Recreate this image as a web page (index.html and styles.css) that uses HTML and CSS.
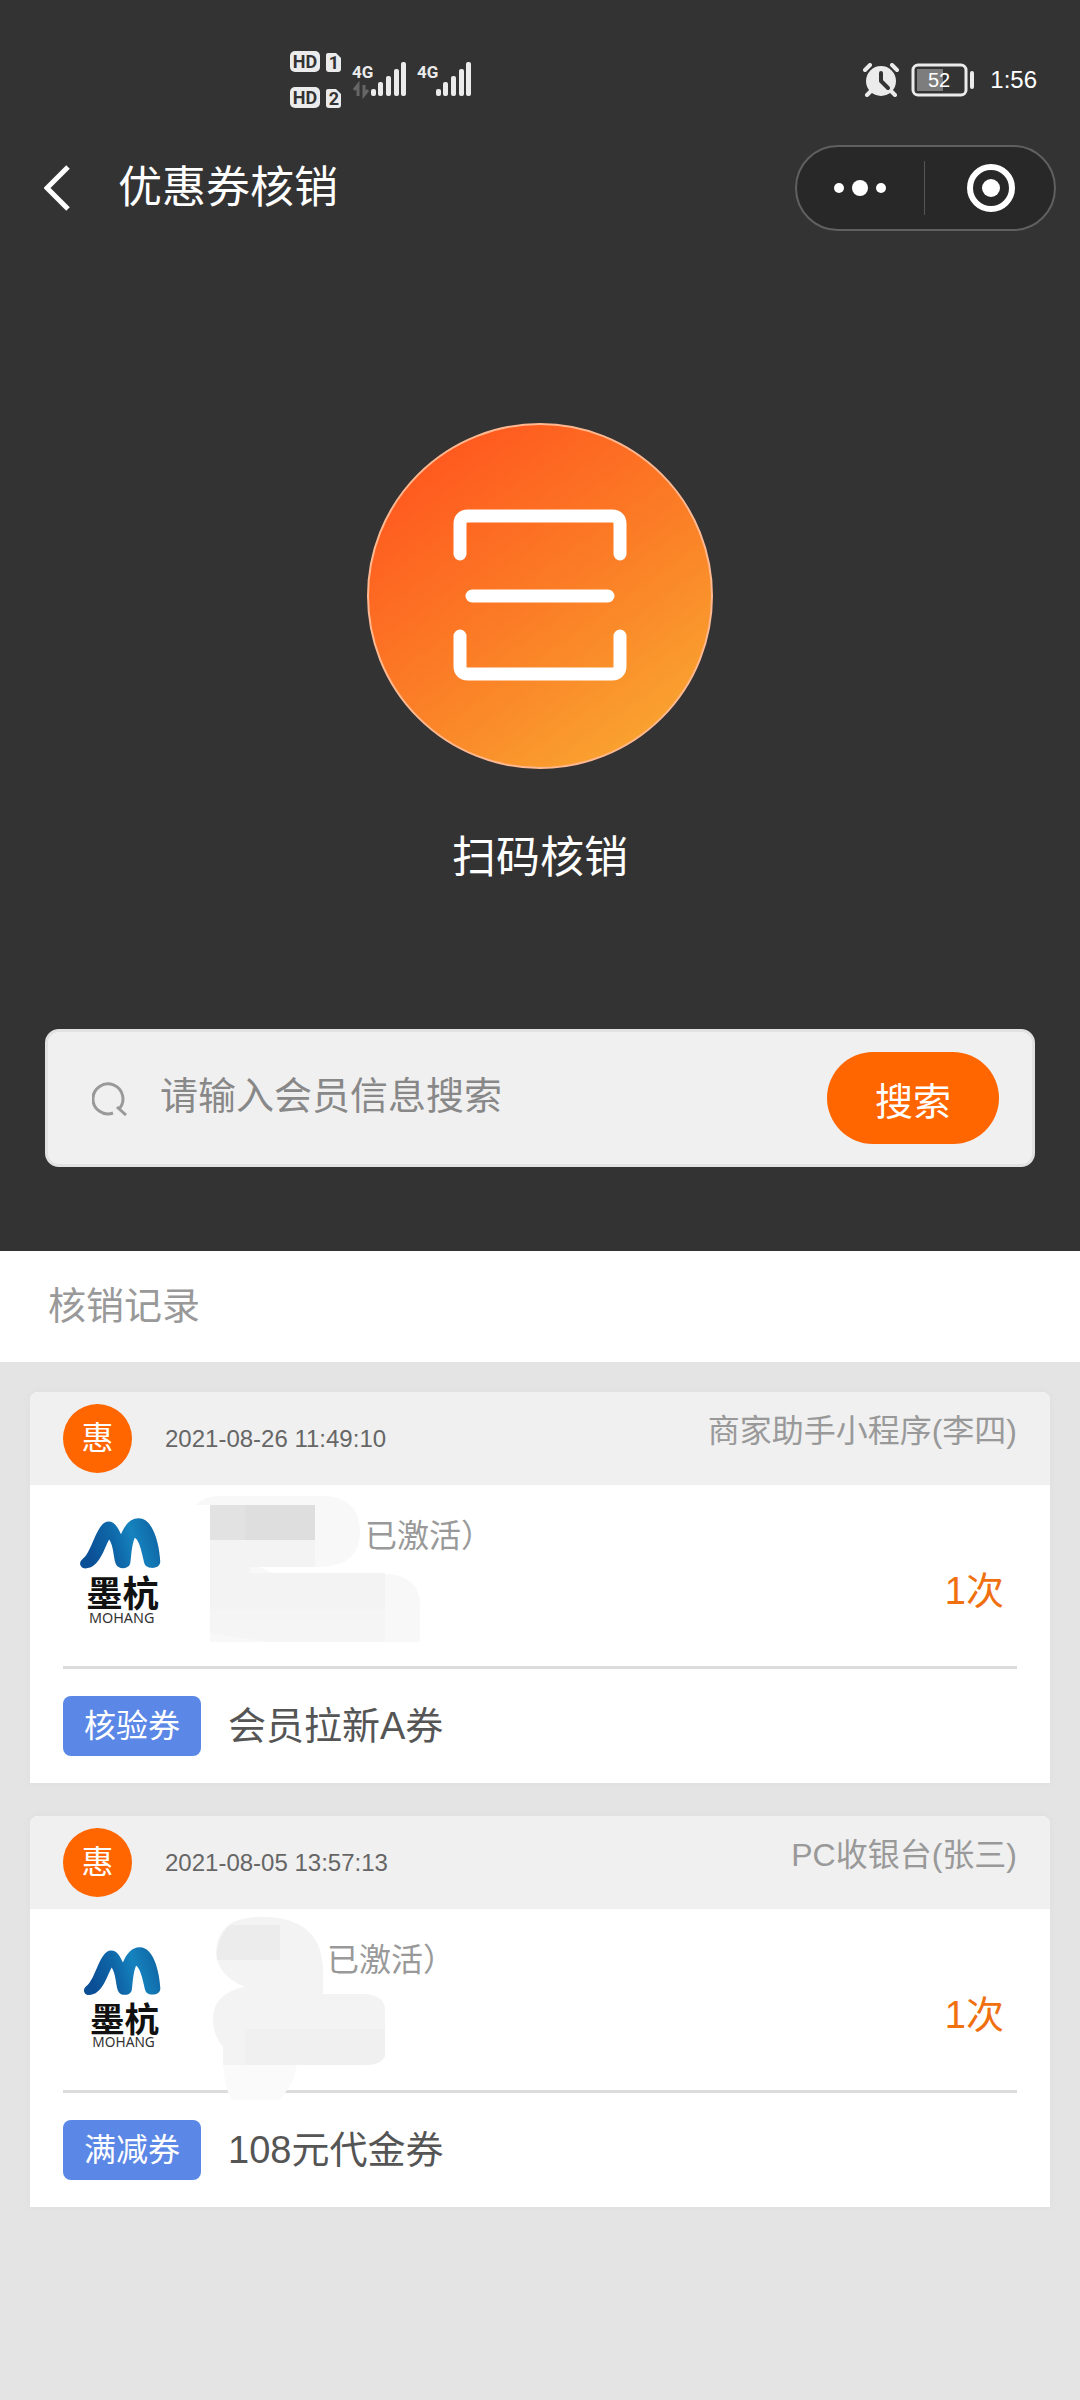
FILE: index.html
```html
<!DOCTYPE html>
<html lang="zh-CN">
<head>
<meta charset="utf-8">
<meta name="viewport" content="width=device-width, initial-scale=1">
<title>优惠券核销</title>
<link rel="stylesheet" href="styles.css">
</head>
<body>
<svg class="defs" aria-hidden="true">
  <defs>
    <linearGradient id="wave" x1="0" y1="0.2" x2="1" y2="0">
      <stop offset="0" stop-color="#0b4f96"/>
      <stop offset="0.35" stop-color="#0f67a8"/>
      <stop offset="0.6" stop-color="#1583bf"/>
      <stop offset="1" stop-color="#0d5e9c"/>
    </linearGradient>
    <symbol id="mohang" viewBox="56 82 250 324">
      <path fill="url(#wave)" d="M75 236C58 236 54 217 66 208C98 184 108 94 146 93C166 93 176 114 184 132C195 105 212 83 238 83C285 83 302 170 304 215C304 240 262 240 256 222C250 200 242 150 226 142C215 170 216 200 212 222C206 240 174 240 168 222C160 200 162 170 148 148C132 176 118 236 75 236Z"/>
      <text class="logo-cn" x="78" y="355">墨杭</text>
      <text class="logo-en" x="86" y="403">MOHANG</text>
    </symbol>
  </defs>
</svg>

<header class="hero">
  <div class="status-bar">
    <svg class="signals" width="182" height="58" viewBox="0 0 182 58" fill="#ebebeb" aria-label="信号">
      <rect width="30" height="21" rx="5"/>
      <path d="M38 2h8l5 5v11a3 3 0 0 1-3 3h-9a3 3 0 0 1-3-3V4a2 2 0 0 1 2-2z"/>
      <rect y="36" width="30" height="21" rx="5"/>
      <path d="M38 38h8l5 5v11a3 3 0 0 1-3 3h-9a3 3 0 0 1-3-3V40a2 2 0 0 1 2-2z"/>
      <g class="sim-text"><text x="15" y="17">HD</text><text x="44" y="18">1</text><text x="15" y="53">HD</text><text x="44" y="54">2</text></g>
      <g class="net-text"><text x="62" y="27">4G</text><text x="127" y="27">4G</text></g>
      <path fill="none" stroke="#666" stroke-width="3" d="M68 45V34l-4 5M74 34v10l4-5"/>
      <g id="bars"><rect x="81" y="38" width="5" height="7" rx="2"/><rect x="88" y="31" width="5" height="14" rx="2"/><rect x="96" y="25" width="5" height="20" rx="2"/><rect x="104" y="18" width="5" height="27" rx="2"/><rect x="111" y="11" width="5" height="34" rx="2"/></g>
      <use href="#bars" x="65"/>
    </svg>
    <div class="status-right">
      <svg width="36" height="34" viewBox="0 0 36 34" aria-label="闹钟">
        <circle cx="18" cy="18" r="15" fill="#ebebeb"/>
        <path d="M2 7l5-5M34 7l-5-5M8 28l-4 4M28 28l4 4" stroke="#ebebeb" stroke-width="4" stroke-linecap="round"/>
        <path d="M18 10v8l7 7" fill="none" stroke="#333" stroke-width="4" stroke-linecap="round" stroke-linejoin="round"/>
      </svg>
      <svg width="64" height="34" viewBox="0 0 64 34" aria-label="电量">
        <rect x="2" y="2" width="53" height="30" rx="5" fill="none" stroke="#ebebeb" stroke-width="3"/>
        <rect x="6" y="6" width="26" height="22" fill="#7d7d7d"/>
        <rect x="59" y="8" width="4" height="18" rx="2" fill="#ebebeb"/>
        <text class="battery-text" x="28" y="24">52</text>
      </svg>
      <span class="clock">1:56</span>
    </div>
  </div>

  <nav class="nav">
    <button class="back" type="button" aria-label="返回">
      <svg width="28" height="46" viewBox="0 0 28 46"><path d="M24 2L3 23l21 21" fill="none" stroke="#fff" stroke-width="5"/></svg>
    </button>
    <h1 class="title">优惠券核销</h1>
    <div class="capsule">
      <button type="button" aria-label="更多">
        <svg width="52" height="18" viewBox="0 0 52 18" fill="#fff"><circle cx="5" cy="9" r="5"/><circle cx="26" cy="9" r="8"/><circle cx="47" cy="9" r="5"/></svg>
      </button>
      <button type="button" aria-label="关闭">
        <svg width="48" height="48" viewBox="0 0 48 48"><circle cx="24" cy="24" r="21" fill="none" stroke="#fff" stroke-width="6"/><circle cx="24" cy="24" r="9" fill="#fff"/></svg>
      </button>
    </div>
  </nav>

  <button class="scan" type="button">
    <svg width="346" height="346" viewBox="0 0 346 346" aria-hidden="true">
      <defs><linearGradient id="sun" x1="0.2" y1="0.1" x2="0.8" y2="0.95"><stop offset="0" stop-color="#ff5a1f"/><stop offset="0.5" stop-color="#fb7d26"/><stop offset="1" stop-color="#f9a430"/></linearGradient></defs>
      <circle cx="173" cy="173" r="172" fill="url(#sun)" stroke="#ffb890" stroke-width="2"/>
      <path d="M93 131v-30q0-8 8-8h144q8 0 8 8v30M93 213v30q0 8 8 8h144q8 0 8-8v-30M105 173h136" fill="none" stroke="#fff" stroke-width="13" stroke-linecap="round"/>
    </svg>
    <span>扫码核销</span>
  </button>

  <form class="search">
    <svg width="36" height="36" viewBox="0 0 36 36" fill="none" stroke="#999" stroke-width="3" aria-hidden="true"><path d="M21 33A15 15 0 1 1 27 29M25 27l9 8"/></svg>
    <input type="text" aria-label="会员信息" placeholder="请输入会员信息搜索">
    <button type="button">搜索</button>
  </form>
</header>

<main>
  <h2 class="section-title">核销记录</h2>
  <div class="records">
    <article class="card">
      <div class="card-head">
        <span class="badge">惠</span>
        <time>2021-08-26 11:49:10</time>
        <span class="source">商家助手小程序(李四)</span>
      </div>
      <div class="member">
        <svg class="logo" viewBox="56 82 250 324" role="img" aria-label="墨杭"><use href="#mohang" x="56" y="82" width="250" height="324"/></svg>
        <div class="masked masked-long">
          <svg class="mosaic" width="240" height="170" viewBox="0 0 240 170" aria-hidden="true">
            <path fill="#f8f8f8" d="M6 20Q14 11 30 11h105q35 2 35 36t-40 35H70l15 7h115q30 4 30 30v38H20V20z"/>
            <path fill="#f3f3f3" d="M20 55h105v27H60v6h135v36H20z"/>
            <path fill="#f5f5f5" d="M20 124h175v33H80L20 148z"/>
            <path fill="#dedede" d="M20 20h105v35H20z"/><path fill="#e2e2e2" d="M20 20h35v35H20z"/>
          </svg>
        </div>
        <span class="state">已激活）</span>
        <strong class="count">1次</strong>
      </div>
      <div class="coupon"><span class="tag">核验券</span><span class="coupon-name">会员拉新A券</span></div>
    </article>

    <article class="card">
      <div class="card-head">
        <span class="badge">惠</span>
        <time>2021-08-05 13:57:13</time>
        <span class="source">PC收银台(张三)</span>
      </div>
      <div class="member">
        <svg class="logo logo-small" viewBox="56 82 250 324" role="img" aria-label="墨杭"><use href="#mohang" x="56" y="82" width="250" height="324"/></svg>
        <div class="masked masked-short">
          <svg class="mosaic" width="240" height="194" viewBox="0 0 240 194" aria-hidden="true">
            <path fill="#fafafa" d="M33 150h74q0 22-18 41H42q-9-15-9-41z"/>
            <path fill="#f3f3f3" d="M68 8q65-2 65 55v22h45q17 3 17 16v46q-4 9-20 9H33v-18q-10-12-10-28 0-26 32-32Q26 66 26 42 28 9 68 8z"/>
            <path fill="#ececec" d="M40 16h50v35H27Q26 30 40 16z"/>
            <path fill="#f0f0f0" d="M55 120h140v27q-4 9-20 9H55z"/>
          </svg>
        </div>
        <span class="state">已激活）</span>
        <strong class="count">1次</strong>
      </div>
      <div class="coupon"><span class="tag">满减券</span><span class="coupon-name">108元代金券</span></div>
    </article>
  </div>
</main>
</body>
</html>
```
FILE: styles.css
```css
* { box-sizing: border-box; }
body {
  margin: 0;
  min-height: 100vh;
  background: #e4e4e4;
  color: #555;
  font-family: "Liberation Sans", "Noto Sans CJK SC", sans-serif;
  font-size: 38px;
}
button {
  margin: 0;
  padding: 0;
  border: 0;
  background: none;
  color: #fff;
  font: inherit;
}
svg { display: block; flex: none; }
.defs { position: absolute; width: 0; height: 0; }

.hero {
  display: flex;
  flex-direction: column;
  padding: 51px 0 84px;
  background: #333;
  color: #fff;
}

.status-bar {
  display: flex;
  justify-content: space-between;
  align-items: center;
  padding: 0 43px 0 290px;
}
.sim-text { fill: #333; font: bold 18px Roboto, sans-serif; text-anchor: middle; }
.net-text { font: bold 17px Roboto, sans-serif; }
.status-right { display: flex; align-items: center; gap: 12px; }
.battery-text { fill: #fff; font-size: 20px; text-anchor: middle; }
.clock { padding-left: 3px; font-size: 24px; line-height: 34px; }

.nav {
  display: flex;
  align-items: center;
  padding: 36px 24px 0 44px;
}
.title {
  flex: 1;
  margin: 0;
  padding-left: 46px;
  font-size: 44px;
  font-weight: 400;
  line-height: 66px;
}
.capsule {
  display: flex;
  width: 261px;
  height: 86px;
  border: 2px solid #606060;
  border-radius: 43px;
  background: #282828;
}
.capsule button {
  display: flex;
  flex: 1;
  align-items: center;
  justify-content: center;
}
.capsule button + button {
  position: relative;
  padding-left: 4px;
}
.capsule button + button::before {
  content: "";
  position: absolute;
  left: 0;
  top: 14px;
  bottom: 14px;
  width: 1px;
  background: #555;
}

.scan {
  display: flex;
  flex-direction: column;
  align-items: center;
  align-self: center;
  gap: 56px;
  margin: 192px 0 138px;
  font-size: 44px;
  line-height: 66px;
}

.search {
  display: flex;
  align-items: center;
  margin: 0 45px;
  padding: 20px 33px 20px 44px;
  border: 3px solid #e2e2e2;
  border-radius: 14px;
  background: #f0f0f0;
}
.search input {
  flex: 1;
  min-width: 0;
  margin: 0 20px 0 32px;
  padding: 0 0 4px;
  border: 0;
  outline: 0;
  background: none;
  color: #555;
  font: inherit;
}
.search input::placeholder { color: #888; opacity: 1; }
.search button {
  width: 172px;
  height: 92px;
  border-radius: 46px;
  background: #ff6600;
}

.section-title {
  margin: 0;
  padding: 26px 48px;
  background: #fff;
  color: #999;
  font-size: 38px;
  font-weight: 400;
  line-height: 59px;
}

.records {
  display: flex;
  flex-direction: column;
  gap: 33px;
  padding: 30px;
}
.card {
  border-radius: 8px 8px 0 0;
  background: #fff;
  box-shadow: 0 0 6px #dcdcdc;
}
.card-head {
  display: flex;
  align-items: center;
  height: 93px;
  padding: 0 33px;
  border-radius: 8px 8px 0 0;
  background: #f0f0f0;
}
.badge {
  width: 69px;
  height: 69px;
  border-radius: 50%;
  background: #ff6600;
  color: #fff;
  font-size: 32px;
  line-height: 69px;
  text-align: center;
}
.card-head time { flex: 1; padding-left: 33px; color: #666; font-size: 24px; }
.source {
  align-self: flex-start;
  padding-top: 19px;
  color: #999;
  font-size: 32px;
  line-height: 40px;
}

.member {
  display: flex;
  align-items: flex-start;
  height: 184px;
  margin: 0 33px;
  border-bottom: 3px solid #dcdcdc;
}
.logo { width: 82px; height: 106px; margin: 33px 0 0 16px; }
.logo-small { width: 78px; height: 101px; margin: 38px 0 0 20px; }
.logo-cn { fill: #111; font: bold 111px "Noto Sans CJK SC", sans-serif; }
.logo-en { fill: #333; font: 44px "Noto Sans", sans-serif; }
.masked { position: relative; height: 170px; }
.masked-long { width: 204px; }
.masked-short { width: 166px; }
.mosaic { position: absolute; top: 0; left: 29px; }
.state { padding-top: 31px; color: #999; font-size: 32px; line-height: 40px; }
.count {
  margin-left: auto;
  padding: 82px 13px 0 0;
  color: #f07010;
  font-weight: 400;
  line-height: 48px;
}

.coupon { display: flex; align-items: center; padding: 27px 33px; }
.tag {
  width: 138px;
  border-radius: 8px;
  background: #5b87e6;
  color: #fff;
  font-size: 32px;
  line-height: 60px;
  text-align: center;
}
.coupon-name { padding-left: 27px; line-height: 60px; }
```
